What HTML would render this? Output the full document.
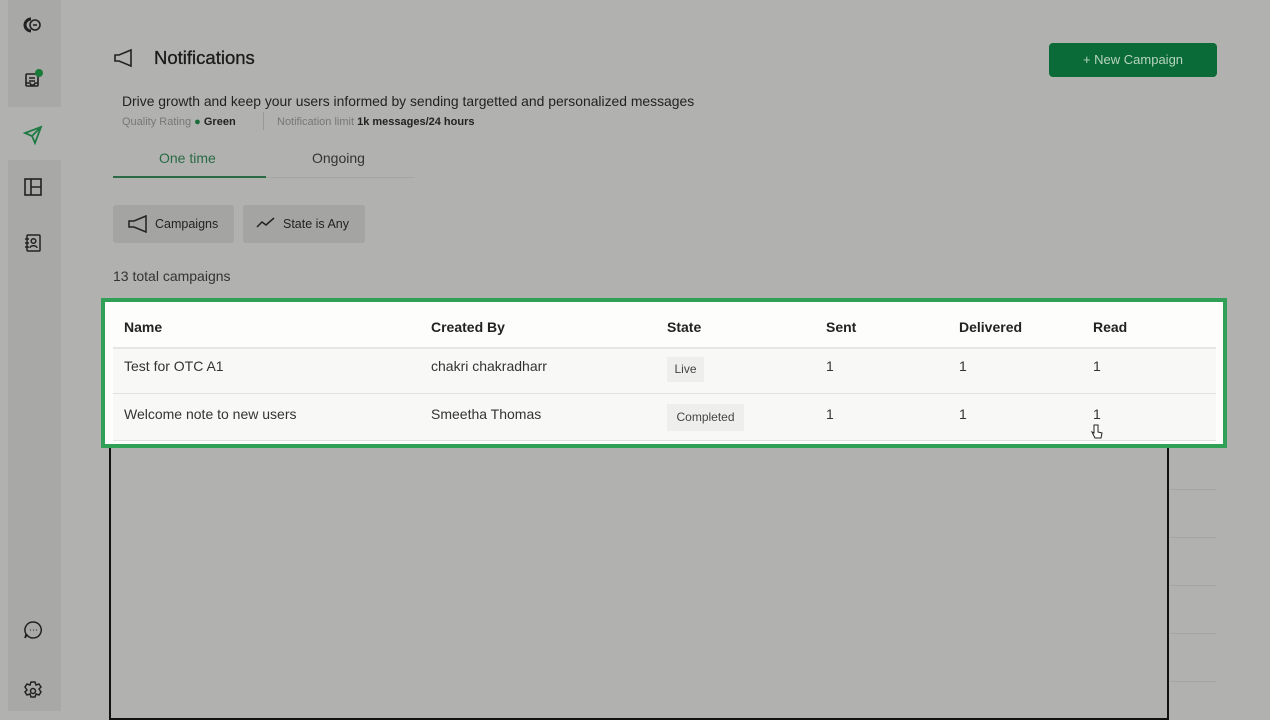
<!DOCTYPE html>
<html><head><meta charset="utf-8"><style>
*{margin:0;padding:0;box-sizing:border-box}
body{width:1270px;height:711px;overflow:hidden;background:#b1b2b0;font-family:"Liberation Sans",sans-serif;color:#222;position:relative}
.a{position:absolute}
.side{left:8px;top:0;width:53px;height:711px;background:#a8a9a7}
.ic{position:absolute;left:22px}
.line{position:absolute;left:1170px;width:46px;height:1px;background:#a4a5a3}
</style></head><body>
<div class="a side"></div>
<div class="a" style="left:8px;top:107px;width:53px;height:53px;background:#b1b2b0"></div>
<svg class="ic" style="top:14px" width="22" height="22" viewBox="0 0 22 22" fill="none" stroke="#222" stroke-width="1.6"><path d="M9 5a6 6 0 1 0 0 12" stroke-width="3"/><circle cx="13" cy="11" r="5"/><path d="M11 11h4"/></svg>
<svg class="ic" style="top:67px" width="24" height="24" viewBox="0 0 24 24" fill="none" stroke="#222" stroke-width="1.6"><rect x="4" y="7" width="12" height="12" rx="1"/><path d="M7 11h6M7 14h6M4 16h4l1 2h3l1-2h3"/><circle cx="17" cy="6" r="4" fill="#1a7a3a" stroke="none"/></svg>
<svg class="ic" style="top:124px" width="22" height="22" viewBox="0 0 22 22" fill="none" stroke="#1e7a44" stroke-width="1.8"><path d="M19 3L3 9l7 3 3 7z M10 12l9-9"/></svg>
<svg class="ic" style="top:176px" width="22" height="22" viewBox="0 0 22 22" fill="none" stroke="#222" stroke-width="1.6"><rect x="3" y="3" width="16" height="16"/><path d="M9 3v16M9 11h10"/></svg>
<svg class="ic" style="top:232px" width="22" height="22" viewBox="0 0 22 22" fill="none" stroke="#222" stroke-width="1.5"><rect x="5" y="3" width="13" height="16" rx="1"/><path d="M3 7h4M3 11h4M3 15h4"/><circle cx="11.5" cy="9" r="2.3"/><path d="M8 16c0-3 7-3 7 0"/></svg>
<svg class="ic" style="top:619px" width="22" height="22" viewBox="0 0 22 22" fill="none" stroke="#222" stroke-width="1.5"><path d="M11 3a8 8 0 1 1-6 13l-2 3 1-4A8 8 0 0 1 11 3z"/><path d="M8 11h.5M11 11h.5M14 11h.5" stroke-width="2"/></svg>
<svg class="ic" style="top:680px" width="22" height="22" viewBox="0 0 22 22" fill="none" stroke="#222" stroke-width="1.5"><path d="M9 2h4l1 3 3-1 2 3-2 2 2 3-2 3-3-1-1 3H9l-1-3-3 1-2-3 2-2-2-3 2-3 3 1z"/><circle cx="11" cy="11" r="2.5"/></svg>
<svg class="a" style="left:113px;top:48px" width="22" height="20" viewBox="0 0 22 20" fill="none" stroke="#222" stroke-width="1.6"><path d="M18 2L6 7H2v6h4l12 5z"/></svg>
<div class="a" style="left:154px;top:47px;font-size:18.5px;color:#1a1a1a;font-weight:500;-webkit-text-stroke:0.3px #1a1a1a">Notifications</div>
<div class="a" style="left:1049px;top:43px;width:168px;height:34px;background:#0b6b38;border-radius:4px;color:#b8d4c0;font-size:13px;text-align:center;line-height:34px">+ New Campaign</div>
<div class="a" style="left:122px;top:93px;font-size:13.9px;color:#222;white-space:nowrap">Drive growth and keep your users informed by sending targetted and personalized messages</div>
<div class="a" style="left:122px;top:116px;font-size:11px;color:#777;white-space:nowrap">Quality Rating <span style="color:#1a6a3a">●</span> <b style="color:#222">Green</b></div>
<div class="a" style="left:263px;top:112px;width:1px;height:18px;background:#999"></div>
<div class="a" style="left:277px;top:116px;font-size:11px;color:#777;white-space:nowrap">Notification limit <b style="color:#222">1k messages/24 hours</b></div>
<div class="a" style="left:159px;top:150px;font-size:14px;color:#2a6a44">One time</div>
<div class="a" style="left:312px;top:150px;font-size:14px;color:#333">Ongoing</div>
<div class="a" style="left:113px;top:177px;width:302px;height:1px;background:#a5a6a4"></div>
<div class="a" style="left:113px;top:176px;width:153px;height:2px;background:#2a6a44"></div>
<div class="a" style="left:113px;top:205px;width:121px;height:38px;background:#a4a5a3;border-radius:3px"></div>
<svg class="a" style="left:127px;top:215px" width="22" height="18" viewBox="0 0 22 18" fill="none" stroke="#222" stroke-width="1.5"><path d="M19 1L7 6H2v6h5l12 5z"/></svg>
<div class="a" style="left:155px;top:217px;font-size:12.5px">Campaigns</div>
<div class="a" style="left:243px;top:205px;width:122px;height:38px;background:#a4a5a3;border-radius:3px"></div>
<svg class="a" style="left:256px;top:217px" width="20" height="12" viewBox="0 0 20 12" fill="none" stroke="#222" stroke-width="1.5"><path d="M1 10l5-5 4 3 8-7"/></svg>
<div class="a" style="left:283px;top:217px;font-size:12.5px">State is Any</div>
<div class="a" style="left:113px;top:268px;font-size:14px;color:#333">13 total campaigns</div>
<div class="a" style="left:109px;top:440px;width:1060px;height:280px;border:2px solid #111"></div>
<div class="line" style="top:489px"></div><div class="line" style="top:537px"></div><div class="line" style="top:585px"></div><div class="line" style="top:633px"></div><div class="line" style="top:681px"></div>
<div class="a" style="left:101px;top:298px;width:1126px;height:150px;background:#fdfdfc;border:4px solid #2fa055"></div>
<div class="a" style="left:113px;top:347px;width:1103px;height:2px;background:#e6e6e4"></div>
<div class="a" style="left:113px;top:349px;width:1103px;height:44px;background:#f8f8f7"></div>
<div class="a" style="left:113px;top:393px;width:1103px;height:1px;background:#e2e2e0"></div>
<div class="a" style="left:113px;top:394px;width:1103px;height:46px;background:#f8f8f7"></div>
<div class="a" style="left:113px;top:440px;width:1103px;height:1px;background:#e2e2e0"></div>
<div class="a" style="top:319px;left:0;font-size:14px;font-weight:bold;color:#222">
<span class="a" style="left:124px">Name</span><span class="a" style="left:431px;white-space:nowrap">Created By</span><span class="a" style="left:667px">State</span><span class="a" style="left:826px">Sent</span><span class="a" style="left:959px">Delivered</span><span class="a" style="left:1093px">Read</span></div>
<div class="a" style="top:358px;left:0;font-size:14px;color:#333;white-space:nowrap">
<span class="a" style="left:124px">Test for OTC A1</span><span class="a" style="left:431px">chakri chakradharr</span><span class="a" style="left:826px">1</span><span class="a" style="left:959px">1</span><span class="a" style="left:1093px">1</span></div>
<div class="a" style="left:667px;top:357px;width:37px;height:25px;background:#eeeeed;font-size:12px;color:#444;line-height:25px;text-align:center">Live</div>
<div class="a" style="top:406px;left:0;font-size:14px;color:#333;white-space:nowrap">
<span class="a" style="left:124px">Welcome note to new users</span><span class="a" style="left:431px">Smeetha Thomas</span><span class="a" style="left:826px">1</span><span class="a" style="left:959px">1</span><span class="a" style="left:1093px">1</span></div>
<div class="a" style="left:667px;top:404px;width:77px;height:27px;background:#eeeeed;font-size:12px;color:#444;line-height:27px;text-align:center">Completed</div>
<svg class="a" style="left:1090px;top:423px" width="14" height="18" viewBox="0 0 14 18" fill="#fff" stroke="#222" stroke-width="1"><path d="M4 2v8l-2-1 3 6h6l1-5-4-1V2z"/></svg>
</body></html>
